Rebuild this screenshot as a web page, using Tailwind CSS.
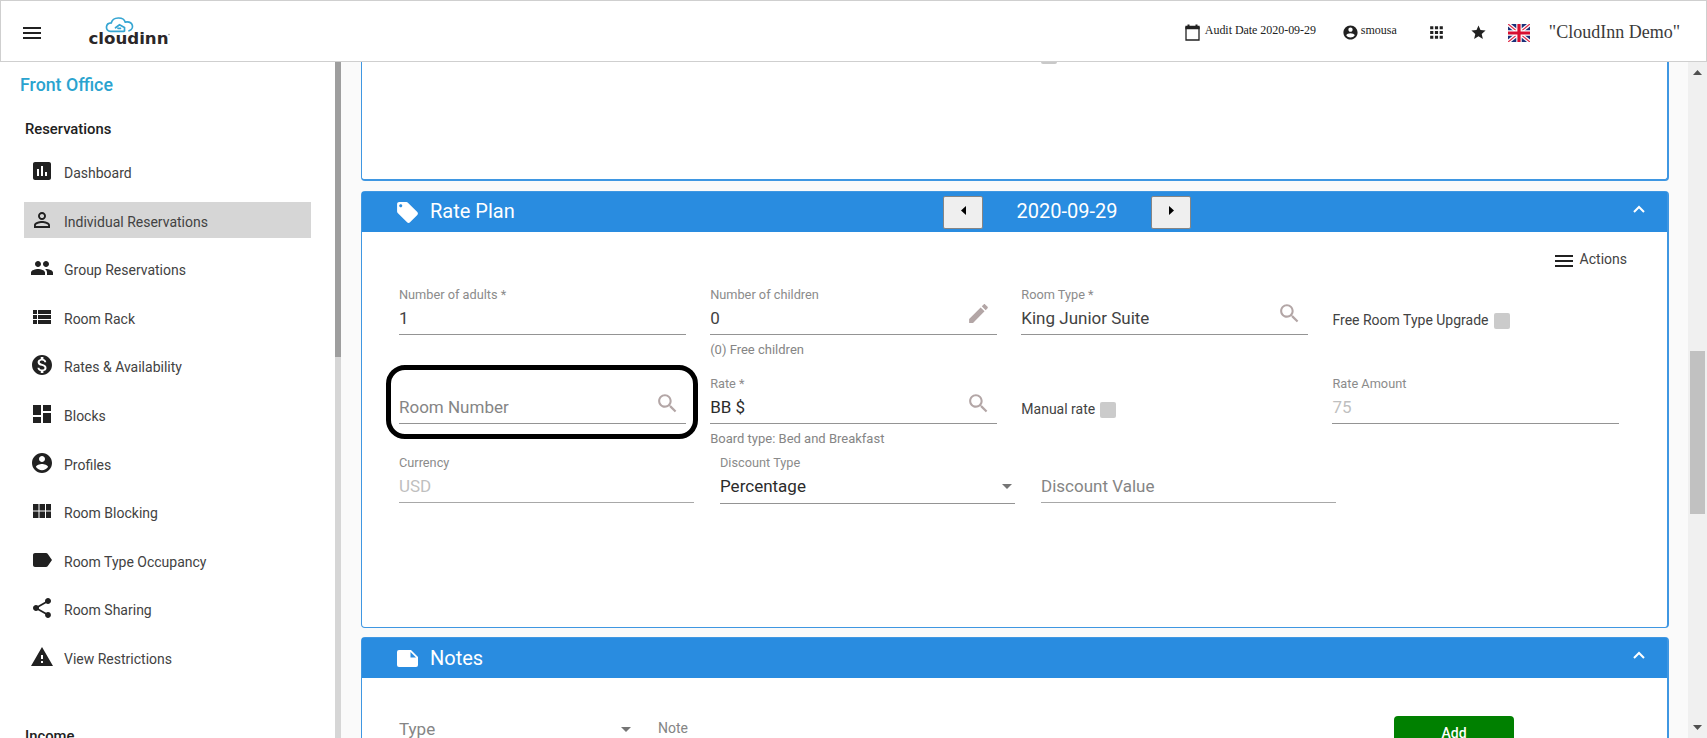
<!DOCTYPE html>
<html lang="en">
<head>
<meta charset="utf-8">
<title>CloudInn</title>
<script src="https://cdn.jsdelivr.net/npm/@tailwindcss/browser@4"></script>
</head>
<body class="flex h-[738px] w-[1707px] flex-col overflow-hidden bg-[#fafafa] font-['Roboto',sans-serif] text-[14px] text-[#424242]">

<svg class="hidden">
  <symbol id="search" viewBox="0 0 24 24"><path d="M15.5 14h-.79l-.28-.27C15.41 12.59 16 11.11 16 9.5 16 5.91 13.09 3 9.5 3S3 5.91 3 9.5 5.91 16 9.5 16c1.61 0 3.09-.59 4.23-1.57l.27.28v.79l5 4.99L20.49 19l-4.99-5zm-6 0C7.01 14 5 11.99 5 9.5S7.01 5 9.5 5 14 7.01 14 9.5 11.99 14 9.5 14z"/></symbol>
  <symbol id="menu" viewBox="0 0 24 24"><path d="M3 18h18v-2H3v2zm0-5h18v-2H3v2zm0-7v2h18V6H3z"/></symbol>
  <symbol id="account" viewBox="0 0 24 24"><path d="M12 2C6.480 2 2 6.480 2 12s4.480 10 10 10 10-4.480 10-10S17.520 2 12 2zm0 3c1.660 0 3 1.340 3 3s-1.340 3-3 3-3-1.340-3-3 1.340-3 3-3zm0 14.200c-2.500 0-4.710-1.280-6-3.220.030-1.990 4-3.080 6-3.080 1.990 0 5.970 1.090 6 3.080-1.290 1.940-3.500 3.220-6 3.220z"/></symbol>
  <symbol id="chevron" viewBox="0 0 12 8"><path d="M1 7l5-5 5 5" fill="none" stroke="currentColor" stroke-width="2"/></symbol>
</svg>

<!-- Top bar -->
<header class="flex h-[62px] shrink-0 items-center border border-[#cfcfcf] bg-white pl-[19px] pr-[26px] text-[#212121]">
  <svg class="mt-[3px] size-6 fill-current"><use href="#menu"/></svg>
  <svg class="ml-[42px] h-[34px] w-[86px]" viewBox="86 14 86 34">
    <g fill="none" stroke="#35a5d2" stroke-width="1.700" stroke-linecap="round">
      <path d="M124 31.300h-13.500c-5.500 0-5.500-8.300.8-8.500 1.500-6.300 12.400-6.300 13.900-.7 8.200-1.200 9.500 6.700 3.800 8.700"/>
      <path d="M115.500 27.800l4-3 5 2.700v3.500M118 28.300h2.500"/>
    </g>
    <text x="88.500" y="43.800" textLength="80" lengthAdjust="spacingAndGlyphs" font-family="DejaVu Sans" font-weight="700" font-size="15.500" fill="#2b2729">cloudinn</text>
    <circle cx="169" cy="34.500" r=".7" fill="#777"/>
  </svg>
  <div class="ml-auto flex items-center font-['Liberation_Serif',serif] text-[12px]">
    <svg class="mt-[2px] h-[17px] w-[15px]" viewBox="0 0 15 17"><path d="M1 3.500h13v12.500H1z" fill="none" stroke="currentColor" stroke-width="1.300"/><path d="M.4 1.800h14.200v3.500H.4zM2.500.4h2v2h-2zM10.500.4h2v2h-2z" fill="currentColor"/></svg>
    <span class="-mt-[2px] ml-[5px] w-[110px] whitespace-nowrap tracking-[-0.04px]">Audit Date 2020-09-29</span>
    <svg class="ml-[27px] mt-[3px] size-[17px] fill-current"><use href="#account"/></svg>
    <span class="-mt-[2px] ml-[2px] w-[37px]">smousa</span>
    <svg class="ml-[29px] mt-[3px] size-[19px] fill-current" viewBox="0 0 24 24"><path d="M4 8h4V4H4v4zm6 12h4v-4h-4v4zm-6 0h4v-4H4v4zm0-6h4v-4H4v4zm6 0h4v-4h-4v4zm6-10v4h4V4h-4zm-6 4h4V4h-4v4zm6 6h4v-4h-4v4zm0 6h4v-4h-4v4z"/></svg>
    <svg class="ml-[24px] mt-[3px] size-[17px] fill-current" viewBox="0 0 24 24"><path d="M12 17.270L18.180 21l-1.640-7.030L22 9.240l-7.190-.61L12 2 9.190 8.630 2 9.240l5.460 4.730L5.820 21z"/></svg>
    <svg class="ml-[21px] mt-[3px] h-[18px] w-[22px]" viewBox="0 0 22 18" preserveAspectRatio="none">
      <path fill="#1b2f78" d="M0 0h22v18H0z"/><path d="M0 0l22 18M22 0L0 18" stroke="#fff" stroke-width="3.800"/><path d="M0 0l22 18M22 0L0 18" stroke="#e0304c" stroke-width="1.300"/>
      <path d="M11 0v18M0 9h22" stroke="#fff" stroke-width="5.400"/><path d="M11 0v18M0 9h22" stroke="#d80f30" stroke-width="3.200"/>
    </svg>
    <span class="ml-[19px] mt-[2px] text-[18px] text-[#3a3a3a]">"CloudInn Demo"</span>
  </div>
</header>

<div class="flex min-h-0 flex-1">
  <!-- Sidebar -->
  <aside class="flex w-[335px] shrink-0 flex-col overflow-hidden bg-white text-[#424242]">
    <h1 class="ml-5 mt-[11px] text-[17.800px] font-medium leading-[24px] text-[#2aa3cf]">Front Office</h1>
    <h2 class="ml-[25px] mt-[22px] text-[14.800px] font-medium leading-5 text-[#212121]">Reservations</h2>
    <nav class="ml-6 mt-[14px] flex w-[287px] shrink-0 flex-col gap-[12.600px] [&_a]:flex [&_a]:h-9 [&_a]:shrink-0 [&_a]:items-center [&_a]:gap-[10px] [&_a]:pl-[6px] [&_span]:mt-[5px] [&_svg]:size-6 [&_svg]:fill-[#212121]">
      <a><svg viewBox="0 0 24 24"><path d="M19 3H5c-1.100 0-2 .9-2 2v14c0 1.100.9 2 2 2h14c1.100 0 2-.9 2-2V5c0-1.100-.9-2-2-2zM9 17H7v-7h2v7zm4 0h-2V7h2v10zm4 0h-2v-4h2v4z"/></svg><span>Dashboard</span></a>
      <a class="bg-[#d6d6d6]"><svg viewBox="0 0 24 24"><path d="M12 5.900c1.160 0 2.100.94 2.100 2.100s-.94 2.100-2.100 2.100S9.900 9.160 9.900 8s.94-2.100 2.100-2.100m0 9c2.970 0 6.100 1.460 6.100 2.100v1.100H5.900V17c0-.64 3.130-2.100 6.100-2.100M12 4C9.790 4 8 5.790 8 8s1.790 4 4 4 4-1.790 4-4-1.790-4-4-4zm0 9c-2.670 0-8 1.340-8 4v3h16v-3c0-2.660-5.330-4-8-4z"/></svg><span>Individual Reservations</span></a>
      <a><svg viewBox="0 0 24 24"><path d="M16 11c1.660 0 2.990-1.340 2.990-3S17.660 5 16 5c-1.660 0-3 1.340-3 3s1.340 3 3 3zm-8 0c1.660 0 2.990-1.340 2.990-3S9.660 5 8 5C6.340 5 5 6.340 5 8s1.340 3 3 3zm0 2c-2.330 0-7 1.170-7 3.500V19h14v-2.500c0-2.330-4.670-3.500-7-3.500zm8 0c-.29 0-.62.02-.97.05 1.160.84 1.970 1.970 1.970 3.450V19h6v-2.500c0-2.330-4.670-3.500-7-3.500z"/></svg><span>Group Reservations</span></a>
      <a><svg viewBox="0 0 24 24"><path d="M3 14h4v-4H3v4zm0 5h4v-4H3v4zM3 9h4V5H3v4zm5 5h13v-4H8v4zm0 5h13v-4H8v4zM8 5v4h13V5H8z"/></svg><span>Room Rack</span></a>
      <a><svg viewBox="0 0 24 24"><path d="M12 2C6.480 2 2 6.480 2 12s4.480 10 10 10 10-4.480 10-10S17.520 2 12 2zm1.410 16.090V20h-2.670v-1.930c-1.710-.36-3.160-1.460-3.270-3.400h1.960c.1 1.050.82 1.870 2.650 1.870 1.960 0 2.400-.98 2.400-1.590 0-.83-.44-1.610-2.670-2.140-2.480-.6-4.180-1.620-4.180-3.670 0-1.720 1.390-2.840 3.110-3.210V4h2.670v1.950c1.860.45 2.790 1.860 2.850 3.390H14.300c-.05-1.110-.64-1.870-2.220-1.870-1.500 0-2.400.68-2.400 1.640 0 .84.65 1.390 2.670 1.910s4.180 1.390 4.180 3.910c-.01 1.830-1.380 2.830-3.120 3.160z"/></svg><span>Rates &amp; Availability</span></a>
      <a><svg viewBox="0 0 24 24"><path d="M3 13h8V3H3v10zm0 8h8v-6H3v6zm10 0h8V11h-8v10zm0-18v6h8V3h-8z"/></svg><span>Blocks</span></a>
      <a><svg><use href="#account"/></svg><span>Profiles</span></a>
      <a><svg viewBox="0 0 24 24"><path d="M3 11.500h5.500V5H3v6.500zm0 7.500h5.500v-6.500H3V19zm6.500 0H15v-6.500H9.500V19zm6.500 0h5v-6.500h-5V19zM9.500 11.500H15V5H9.500v6.500zM16 5v6.500h5V5h-5z"/></svg><span>Room Blocking</span></a>
      <a><svg viewBox="0 0 24 24"><path d="M17.630 5.840C17.270 5.330 16.670 5 16 5L5 5.010C3.900 5.010 3 5.900 3 7v10c0 1.100.9 1.990 2 1.990L16 19c.67 0 1.270-.33 1.630-.84L22 12l-4.370-6.160z"/></svg><span>Room Type Occupancy</span></a>
      <a><svg viewBox="0 0 24 24"><path d="M18 16.080c-.76 0-1.440.3-1.960.77L8.910 12.700c.05-.23.09-.46.09-.7s-.04-.47-.09-.7l7.050-4.110c.54.5 1.250.81 2.040.81 1.660 0 3-1.340 3-3s-1.340-3-3-3-3 1.340-3 3c0 .24.04.47.09.7L8.040 9.810C7.500 9.310 6.790 9 6 9c-1.660 0-3 1.340-3 3s1.340 3 3 3c.79 0 1.500-.31 2.040-.81l7.120 4.160c-.05.21-.08.43-.08.65 0 1.610 1.310 2.920 2.920 2.920s2.920-1.310 2.920-2.920-1.310-2.920-2.920-2.920z"/></svg><span>Room Sharing</span></a>
      <a><svg viewBox="0 0 24 24"><path d="M1 21h22L12 2 1 21zm12-3h-2v-2h2v2zm0-4h-2v-4h2v4z"/></svg><span>View Restrictions</span></a>
    </nav>
    <h2 class="ml-[25px] mt-[51px] shrink-0 text-[14.800px] font-medium leading-5 text-[#212121]">Income</h2>
  </aside>
  <div class="w-[6px] shrink-0 bg-[#d6d6d6]"><div class="h-[295px] bg-[#9e9e9e]"></div></div>

  <!-- Content -->
  <main class="flex min-w-0 flex-1 flex-col overflow-hidden pl-5 pr-[19px]">
    <section class="h-[119px] shrink-0 rounded-b border-x border-b-2 border-r-2 border-[#3f97e2] bg-white">
      <div class="ml-[679px] h-[2px] w-4 rounded-b-sm bg-[#c9c9c9]"></div>
    </section>

    <section class="mt-[10px] flex h-[437px] shrink-0 flex-col rounded border border-r-2 border-[#3f97e2] bg-white">
      <div class="flex h-[40px] shrink-0 items-center bg-[#298ce0] pl-[33px] pr-[22px] text-[20px] leading-6 text-white">
        <svg class="size-[25px] fill-current" viewBox="0 0 24 24"><path d="M21.410 11.580l-9-9C12.050 2.220 11.550 2 11 2H4c-1.100 0-2 .9-2 2v7c0 .55.22 1.050.59 1.420l9 9c.36.36.86.58 1.410.58.55 0 1.050-.22 1.410-.59l7-7c.37-.36.59-.86.59-1.410 0-.55-.23-1.060-.59-1.420zM5.500 7C4.670 7 4 6.330 4 5.500S4.670 4 5.500 4 7 4.670 7 5.500 6.330 7 5.500 7z"/></svg>
        <span class="-mt-[2px] ml-[10px] w-[513px]">Rate Plan</span>
        <button class="flex h-[33px] w-10 items-center justify-center rounded-[2px] border border-[#858585] bg-[#efefef]"><svg class="mt-[-4px] h-[9px] w-[5px]" viewBox="0 0 6 10" preserveAspectRatio="none"><path d="M6 0v10L0 5z"/></svg></button>
        <span class="-mt-[2px] w-[168px] text-center">2020-09-29</span>
        <button class="flex h-[33px] w-10 items-center justify-center rounded-[2px] border border-[#858585] bg-[#efefef]"><svg class="mt-[-4px] h-[9px] w-[5px]" viewBox="0 0 6 10" preserveAspectRatio="none"><path d="M0 0v10l6-5z"/></svg></button>
        <svg class="-mt-[7px] ml-auto h-2 w-3"><use href="#chevron"/></svg>
      </div>
      <div class="mt-[15px] flex h-6 items-center self-end pr-[40px]">
        <svg class="mt-[3px] size-6 fill-[#212121]"><use href="#menu"/></svg><span class="ml-1">Actions</span>
      </div>

      <div class="ml-[37px] mt-[16px] grid w-[1220.500px] grid-cols-[286.500px_286.500px_286.500px_286.500px] gap-x-[24.670px]">
        <div class="h-[89px]">
          <div class="h-4 text-[12.750px] leading-4 text-[#8b8b8b]">Number of adults *</div>
          <div class="mt-[3px] h-[29px] border-b border-[#949494] text-[17px] leading-6">1</div>
        </div>
        <div class="h-[89px]">
          <div class="h-4 text-[12.750px] leading-4 text-[#8b8b8b]">Number of children</div>
          <div class="mt-[3px] flex h-[29px] justify-between border-b border-[#949494] pr-[6px] text-[17px] leading-6"><span>0</span><svg class="-mt-[5px] size-[25px] fill-[#b3a6a6]" viewBox="0 0 24 24"><path d="M3 17.250V21h3.750L17.810 9.940l-3.750-3.750L3 17.250zM20.710 7.040c.39-.39.39-1.020 0-1.410l-2.340-2.340c-.39-.39-1.020-.39-1.410 0l-1.830 1.830 3.750 3.750 1.830-1.830z"/></svg></div>
          <div class="mt-[7px] text-[13px] leading-4 text-[#858585]">(0) Free children</div>
        </div>
        <div class="h-[89px]">
          <div class="h-4 text-[12.750px] leading-4 text-[#8b8b8b]">Room Type *</div>
          <div class="mt-[3px] flex h-[29px] justify-between border-b border-[#949494] pr-[5.500px] text-[17px] leading-6"><span>King Junior Suite</span><svg class="-mt-[5px] size-[25px] fill-[#b3a6a6]"><use href="#search"/></svg></div>
        </div>
        <div class="flex h-[89px] pt-[24px]"><span class="leading-[18px]">Free Room Type Upgrade</span><span class="ml-[5px] mt-[2px] size-4 rounded-[2px] bg-[#cbcbcb]"></span></div>

        <div class="relative h-[79px]">
          <div class="absolute -left-[13px] -top-[11px] h-[74px] w-[312px] rounded-[19px] border-[5px] border-black"></div>
          <div class="mt-[19px] flex h-[29px] justify-between border-b border-[#949494] pr-[5.500px] text-[17px] leading-6 text-[#858585]"><span>Room Number</span><svg class="-mt-[4px] size-[25px] fill-[#b3a6a6]"><use href="#search"/></svg></div>
        </div>
        <div class="h-[79px]">
          <div class="h-4 text-[12.750px] leading-4 text-[#8b8b8b]">Rate *</div>
          <div class="mt-[3px] flex h-[29px] justify-between border-b border-[#949494] pr-[5.500px] text-[17px] leading-6 text-[#2b2b2b]"><span>BB $</span><svg class="-mt-[4px] size-[25px] fill-[#b3a6a6]"><use href="#search"/></svg></div>
          <div class="mt-[7px] text-[13px] leading-4 text-[#858585]">Board type: Bed and Breakfast</div>
        </div>
        <div class="flex h-[79px] pt-6"><span class="leading-[18px]">Manual rate</span><span class="ml-[5px] mt-[2px] size-4 rounded-[2px] bg-[#cbcbcb]"></span></div>
        <div class="h-[79px]">
          <div class="h-4 text-[12.750px] leading-4 text-[#8b8b8b]">Rate Amount</div>
          <div class="mt-[3px] h-[29px] border-b border-[#949494] text-[17px] leading-6 text-[#bfbfbf]">75</div>
        </div>
      </div>
      <div class="ml-[37px] grid grid-cols-[295px_295px_295px] gap-x-[26px]">
        <div>
          <div class="h-4 text-[12.750px] leading-4 text-[#8b8b8b]">Currency</div>
          <div class="mt-[3px] h-[29px] border-b border-[#a8a8a8] text-[17px] leading-6 text-[#bfbfbf]">USD</div>
        </div>
        <div>
          <div class="h-4 text-[12.750px] leading-4 text-[#8b8b8b]">Discount Type</div>
          <div class="mt-[3px] flex h-[30px] justify-between border-b border-[#949494] pr-[3px] text-[17px] leading-6 text-[#2b2b2b]"><span>Percentage</span><svg class="mt-[10px] h-[5px] w-[10px] fill-[#757575]" viewBox="0 0 10 5"><path d="M0 0h10L5 5z"/></svg></div>
        </div>
        <div>
          <div class="mt-[19px] h-[29px] border-b border-[#a8a8a8] text-[17px] leading-6 text-[#858585]">Discount Value</div>
        </div>
      </div>
    </section>

    <section class="mt-[9px] flex h-[200px] shrink-0 flex-col rounded border border-r-2 border-[#3f97e2] bg-white">
      <div class="flex h-[40px] shrink-0 items-center bg-[#298ce0] pl-[33px] pr-[22px] text-[20px] leading-6 text-white">
        <svg class="mt-px size-[25px]" viewBox="0 0 25 25"><path fill="currentColor" d="M4 4h12l7 7v8a2 2 0 0 1-2 2H4a2 2 0 0 1-2-2V6a2 2 0 0 1 2-2z"/><path d="M15.500 6v5.500H21z" fill="#298ce0"/></svg>
        <span class="ml-[10px]">Notes</span>
        <svg class="-mt-[6px] ml-auto h-2 w-3"><use href="#chevron"/></svg>
      </div>
      <div class="ml-[37px] mt-[38px] flex items-start text-[#858585]">
        <span class="mt-px w-[222px] text-[17px] leading-6">Type</span>
        <svg class="mt-[11px] h-[5px] w-[10px] fill-[#757575]" viewBox="0 0 10 5"><path d="M0 0h10L5 5z"/></svg>
        <span class="ml-[27px] mt-[2px] w-[736px] leading-5">Note</span>
        <button class="h-[34px] w-[120px] rounded bg-[#008000] text-center text-[14px] font-medium text-white">Add</button>
      </div>
    </section>
  </main>

  <!-- Page scrollbar -->
  <div class="flex w-[19px] shrink-0 flex-col items-center bg-[#f0f0f0]">
    <svg class="mt-[8px] h-[5px] w-[9px] fill-[#505050]" viewBox="0 0 9 5"><path d="M0 5h9L4.500 0z"/></svg>
    <div class="mt-[276px] h-[163px] w-[15px] bg-[#c1c1c1]"></div>
    <svg class="mb-[8px] mt-auto h-[5px] w-[9px] fill-[#505050]" viewBox="0 0 9 5"><path d="M0 0h9L4.500 5z"/></svg>
  </div>
</div>
</body>
</html>
